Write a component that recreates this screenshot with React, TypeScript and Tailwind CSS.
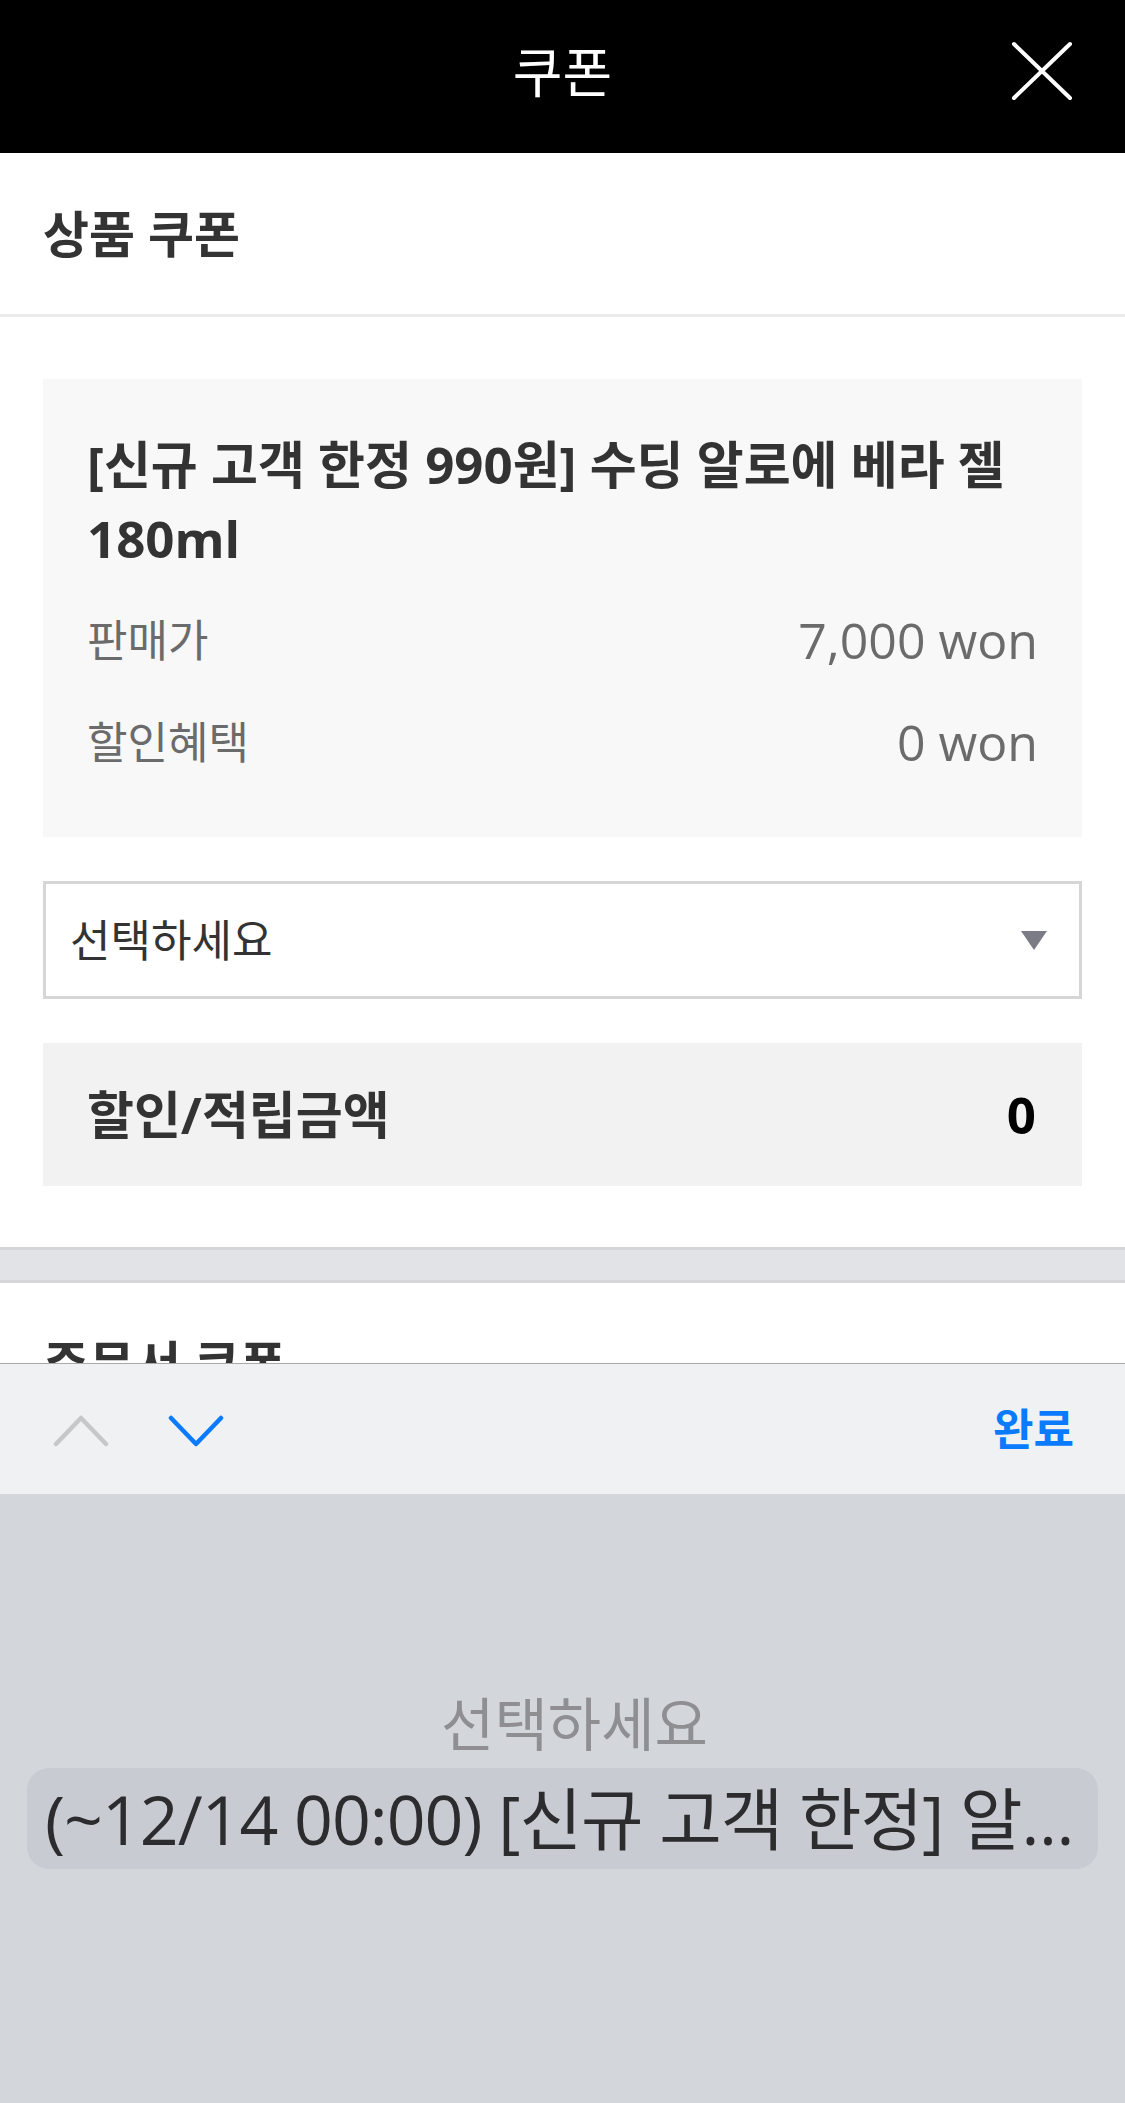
import React from "react";

const FONT = "font-['Open_Sans','Noto_Sans_CJK_KR',sans-serif]";

function CloseIcon() {
  return (
    <svg width="62" height="60" viewBox="0 0 62 60" fill="none">
      <path d="M3 3 L59 57 M59 3 L3 57" stroke="#ffffff" strokeWidth="4" strokeLinecap="round" />
    </svg>
  );
}

function Chevron({ up, color }: { up?: boolean; color: string }) {
  return (
    <svg width="56" height="32" viewBox="0 0 56 32" fill="none">
      <path
        d={up ? "M3 29 L28 3 L53 29" : "M3 3 L28 29 L53 3"}
        stroke={color}
        strokeWidth="4.5"
        strokeLinecap="round"
        strokeLinejoin="round"
      />
    </svg>
  );
}

function SectionTitle({ children }: { children: React.ReactNode }) {
  return (
    <div className="h-[161px] flex items-center px-[43px]">
      <span className="text-[50px] leading-[60px] font-bold text-[#333333]">{children}</span>
    </div>
  );
}

export default function App() {
  return (
    <div className={`${FONT} w-[1125px] h-[2103px] overflow-hidden bg-white flex flex-col`}>
      {/* Header */}
      <div className="h-[153px] shrink-0 bg-black grid grid-cols-[1fr_auto_1fr] items-center">
        <div />
        <div className="text-white text-[54px] leading-[60px] pb-[10px]">쿠폰</div>
        <div className="flex justify-end pr-[52px] pb-[12px]">
          <CloseIcon />
        </div>
      </div>

      {/* Product coupon section */}
      <div className="shrink-0 bg-white">
        <div className="border-b-[3px] border-[#ebebeb]">
          <SectionTitle>상품 쿠폰</SectionTitle>
        </div>
        <div className="px-[43px] pt-[62px] pb-[61px] flex flex-col gap-[44px]">
          {/* Product card */}
          <div className="bg-[#f8f8f8] pt-[48px] px-[44px] pb-[44px]">
            <div className="text-[51px] leading-[74px] font-bold text-[#333333] whitespace-nowrap">
              [신규 고객 한정 990원] 수딩 알로에 베라 젤
              <br />
              180ml
            </div>
            <div className="mt-[14px] flex flex-col">
              <div className="h-[102px] flex items-center justify-between">
                <span className="text-[44px] text-[#6b6b6b]">판매가</span>
                <span className="text-[50px] text-[#6b6b6b]">7,000 won</span>
              </div>
              <div className="h-[102px] flex items-center justify-between">
                <span className="text-[44px] text-[#6b6b6b]">할인혜택</span>
                <span className="text-[50px] text-[#6b6b6b]">0 won</span>
              </div>
            </div>
          </div>

          {/* Select */}
          <div className="h-[118px] border-[3px] border-[#d6d6d6] bg-white flex items-center justify-between pl-[24px] pr-[32px]">
            <span className="text-[44px] text-[#333333]">선택하세요</span>
            <svg width="26" height="19" viewBox="0 0 26 19">
              <path d="M0 0 L26 0 L13 19 Z" fill="#7b7b85" />
            </svg>
          </div>

          {/* Summary */}
          <div className="h-[143px] bg-[#f2f2f2] flex items-center justify-between pl-[44px] pr-[46px]">
            <span className="text-[51px] font-bold text-[#333333]">할인/적립금액</span>
            <span className="text-[51px] font-bold text-black">0</span>
          </div>
        </div>
      </div>

      {/* Gray band */}
      <div className="h-[36px] shrink-0 bg-[#e2e3e7] border-y-[3px] border-[#d6d6d9]" />

      {/* Order coupon section (partially hidden behind the keyboard toolbar) */}
      <div className="h-[80px] shrink-0 overflow-hidden bg-white">
        <SectionTitle>주문서 쿠폰</SectionTitle>
      </div>

      {/* Keyboard toolbar */}
      <div className="h-[131px] shrink-0 bg-[#f0f1f3] border-t border-[#a9a9ab] flex items-center justify-between pl-[53px] pr-[51px]">
        <div className="flex items-center gap-[59px] pt-[4px]">
          <Chevron up color="#c7c7c9" />
          <Chevron color="#0a7aff" />
        </div>
        <span className="text-[44px] font-bold text-[#0a7aff] leading-[60px]">완료</span>
      </div>

      {/* Picker */}
      <div className="flex-1 bg-[#d3d6db] flex flex-col items-stretch pt-[189px]">
        <div className="h-[80px] flex items-center justify-center pl-[24px] text-[58px] text-[#8e8e93]">
          선택하세요
        </div>
        <div className="mt-[5px] mx-[27px] h-[101px] rounded-[22px] bg-[#c8cbd1] flex items-center pl-[18px]">
          <span className="text-[68px] leading-[80px] text-[#2c2c2e] whitespace-nowrap tracking-[-1px]">
            (~12/14 00:00) [신규 고객 한정] 알…
          </span>
        </div>
      </div>
    </div>
  );
}
